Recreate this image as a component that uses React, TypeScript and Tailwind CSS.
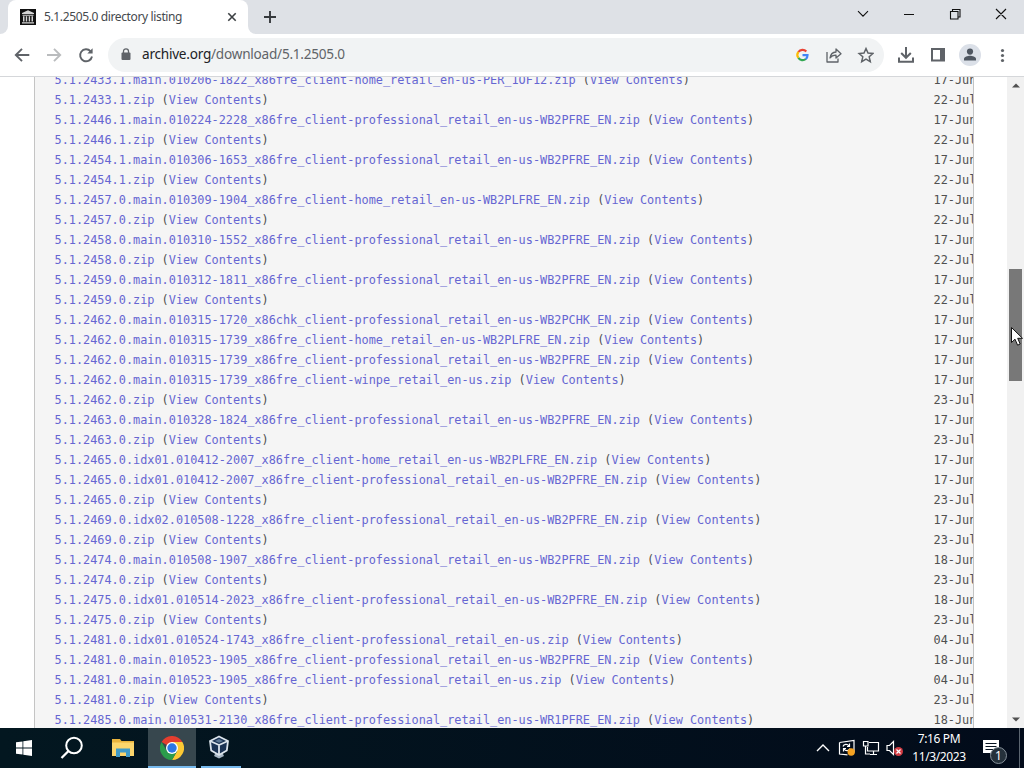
import React from "react";

type Entry = [name: string, date: string];

const P = "_x86fre_client-professional_retail_en-us-WB2PFRE_EN.zip";

const entries: Entry[] = [
  ["5.1.2433.1.main.010206-1822_x86fre_client-home_retail_en-us-PER_1OF12.zip", "17-Jun"],
  ["5.1.2433.1.zip", "22-Jul"],
  ["5.1.2446.1.main.010224-2228" + P, "17-Jun"],
  ["5.1.2446.1.zip", "22-Jul"],
  ["5.1.2454.1.main.010306-1653" + P, "17-Jun"],
  ["5.1.2454.1.zip", "22-Jul"],
  ["5.1.2457.0.main.010309-1904_x86fre_client-home_retail_en-us-WB2PLFRE_EN.zip", "17-Jun"],
  ["5.1.2457.0.zip", "22-Jul"],
  ["5.1.2458.0.main.010310-1552" + P, "17-Jun"],
  ["5.1.2458.0.zip", "22-Jul"],
  ["5.1.2459.0.main.010312-1811" + P, "17-Jun"],
  ["5.1.2459.0.zip", "22-Jul"],
  ["5.1.2462.0.main.010315-1720_x86chk_client-professional_retail_en-us-WB2PCHK_EN.zip", "17-Jun"],
  ["5.1.2462.0.main.010315-1739_x86fre_client-home_retail_en-us-WB2PLFRE_EN.zip", "17-Jun"],
  ["5.1.2462.0.main.010315-1739" + P, "17-Jun"],
  ["5.1.2462.0.main.010315-1739_x86fre_client-winpe_retail_en-us.zip", "17-Jun"],
  ["5.1.2462.0.zip", "23-Jul"],
  ["5.1.2463.0.main.010328-1824" + P, "17-Jun"],
  ["5.1.2463.0.zip", "23-Jul"],
  ["5.1.2465.0.idx01.010412-2007_x86fre_client-home_retail_en-us-WB2PLFRE_EN.zip", "17-Jun"],
  ["5.1.2465.0.idx01.010412-2007" + P, "17-Jun"],
  ["5.1.2465.0.zip", "23-Jul"],
  ["5.1.2469.0.idx02.010508-1228" + P, "17-Jun"],
  ["5.1.2469.0.zip", "23-Jul"],
  ["5.1.2474.0.main.010508-1907" + P, "18-Jun"],
  ["5.1.2474.0.zip", "23-Jul"],
  ["5.1.2475.0.idx01.010514-2023" + P, "18-Jun"],
  ["5.1.2475.0.zip", "23-Jul"],
  ["5.1.2481.0.idx01.010524-1743_x86fre_client-professional_retail_en-us.zip", "04-Jul"],
  ["5.1.2481.0.main.010523-1905" + P, "18-Jun"],
  ["5.1.2481.0.main.010523-1905_x86fre_client-professional_retail_en-us.zip", "04-Jul"],
  ["5.1.2481.0.zip", "23-Jul"],
  ["5.1.2485.0.main.010531-2130_x86fre_client-professional_retail_en-us-WR1PFRE_EN.zip", "18-Jun"],
];

function TabStrip() {
  return (
    <div className="flex h-[34px] items-stretch bg-[#dee1e6]">
      <div className="flex w-2 items-end bg-white">
        <div className="h-full w-2 rounded-br-lg bg-[#dee1e6]" />
      </div>
      <div className="flex w-[240px] items-center rounded-t-lg bg-white pl-3">
        <svg width="16" height="16" viewBox="0 0 16 16">
          <rect width="16" height="16" fill="#111" />
          <path d="M8 1.2 14 4v1H2V4zM2.5 5.8h11v.9h-11zM3 7.2h1.5v5.3H3zM5.8 7.2h1.4v5.3H5.800zM8.700 7.200h1.400v5.300H8.700zM11.500 7.200H13v5.300h-1.500zM2 13.200h12v1.300H2z" fill="#d5d5d5" />
        </svg>
        <span className="ml-2 w-[183px] whitespace-nowrap text-[12px] tracking-[-0.37px] text-[#45494d]">5.1.2505.0 directory listing</span>
        <svg width="10" height="10" viewBox="0 0 10 10" stroke="#3c4043" strokeWidth="1.6"><path d="m1.3 1.3 7.4 7.4m0-7.4L1.3 8.7" /></svg>
      </div>
      <div className="flex w-2 bg-white">
        <div className="h-full w-2 rounded-bl-lg bg-[#dee1e6]" />
      </div>
      <svg className="ml-[7px] mt-[10px]" width="14" height="14" viewBox="0 0 14 14" stroke="#36393d" strokeWidth="1.9"><path d="M7 1v12M1 7h12" /></svg>
      <svg className="ml-auto mt-[8px]" width="152" height="12" viewBox="0 0 152 12" fill="none" stroke="#111" strokeWidth="1.1">
        <path d="m1 3.200 5 5 5-5M47 6.500h10M93.500 3.500h7.500v7.500h-7.500zM95.500 3.500v-2h7.500V9h-2M139 1l10 10m0-10-10 10" />
      </svg>
      <div className="w-[15px]" />
    </div>
  );
}

function Toolbar() {
  return (
    <div className="flex h-[43px] items-center border-b border-[#d5d7da] bg-white pb-px">
      <svg width="108" height="24" viewBox="0 0 108 24" fill="none" strokeWidth="1.9">
        <path d="M29.3 12H16m6-6.2L15.8 12l6.2 6.2" stroke="#5f6368" />
        <path d="M47 12h13m-6-6.2 6.2 6.2-6.2 6.2" stroke="#babcbe" />
        <path d="M90.6 8.3A6 6 0 1 0 92 13.5" stroke="#5f6368" />
        <path d="M92.6 5.2v5.3h-5.3z" fill="#5f6368" />
      </svg>
      <div className="flex h-[34px] w-[776px] items-center rounded-full bg-[#f1f3f4] pl-[13px]">
        <svg width="10" height="13" viewBox="0 0 10 13"><rect x=".5" y="4.5" width="9" height="7.5" rx="1" fill="#5f6368" /><path d="M2.5 5V3.3a2.5 2.5 0 0 1 5 0V5" fill="none" stroke="#5f6368" strokeWidth="1.3" /></svg>
        <span className="ml-[11px] whitespace-nowrap text-[13.6px] tracking-[-0.24px] text-[#5f6368]"><span className="text-[#202124]">archive.org</span>/download/5.1.2505.0</span>
        <svg className="ml-auto mr-[10px]" width="80" height="18" viewBox="0 0 80 18" fill="none">
          <g strokeWidth="2.2">
            <path d="M12.300 5.500A5 5 0 0 0 4.400 6" stroke="#ea4335" />
            <path d="M4.400 5.900a5 5 0 0 0 0 6" stroke="#fbbc05" />
            <path d="M4.400 11.800a5 5 0 0 0 7.400 1.200" stroke="#34a853" />
            <path d="M11.700 13.100A5 5 0 0 0 13.500 9.200H8.500" stroke="#4285f4" />
          </g>
          <g stroke="#5f6368" strokeWidth="1.3" strokeLinejoin="round">
            <path d="M33 6v10h11v-3.500" />
            <path d="M36 12c.6-4 2.800-5.800 6-6V3l5 4.700-5 4.300V9.200c-2.700-.1-4.600.8-6 2.800z" />
          </g>
          <path d="m72 2.500 2 4.500 4.900.5-3.700 3.300 1.100 4.900-4.300-2.500-4.300 2.500 1.100-4.900-3.700-3.300L70 7z" stroke="#5f6368" strokeWidth="1.500" />
        </svg>
      </div>
      <svg width="140" height="24" viewBox="0 0 140 24" fill="none">
        <path d="M22 4v10.500m-4.800-4.500 4.800 4.800 4.800-4.800M15 14.500v4.200h14v-4.200" stroke="#5f6368" strokeWidth="2" />
        <path d="M47 5h14v13.500H47zm2 2v9.500h7V7z" fill="#5f6368" fillRule="evenodd" />
        <circle cx="86" cy="12" r="11" fill="#dbe0e8" />
        <circle cx="86" cy="8.600" r="3.100" fill="#4e5661" />
        <path d="M80 17.500v-1.700c0-2.100 3.900-3.100 6-3.100s6 1 6 3.100v1.700z" fill="#4e5661" />
        <g fill="#5f6368"><circle cx="118.500" cy="7.500" r="1.600" /><circle cx="118.500" cy="12.500" r="1.600" /><circle cx="118.500" cy="17.500" r="1.600" /></g>
      </svg>
    </div>
  );
}

function Listing() {
  return (
    <div className="flex h-[651px] overflow-hidden bg-white">
      <div className="ml-[34px] w-[940px] overflow-hidden border-x border-[#c4c4c4] bg-[#f5f5f5]">
        <div className="-mt-[6px] pl-[19.500px] font-['DejaVu_Sans_Mono',monospace] text-[11.870px] text-[#505050]">
          {entries.map(([name, date]) => (
            <div key={name} className="flex h-5 items-center whitespace-pre">
              <span className="w-[879px] shrink-0">
                <a className="text-[#6666d2]">{name}</a> (<a className="text-[#6666d2]">View Contents</a>)
              </span>
              <span>{date}</span>
            </div>
          ))}
        </div>
      </div>
      <div className="ml-auto flex w-[17px] flex-col items-center bg-[#f1f1f1]">
        <svg className="mt-[6px]" width="8" height="5" viewBox="0 0 8 5"><path d="m0 4.500 4-4 4 4z" fill="#505050" /></svg>
        <div className="mt-[181px] h-[112px] w-[13px] bg-[#787878]" />
        <svg className="mb-[6px] mt-auto" width="8" height="5" viewBox="0 0 8 5"><path d="m0 .5 4 4 4-4z" fill="#505050" /></svg>
      </div>
    </div>
  );
}

function Taskbar() {
  return (
    <div className="flex h-10 bg-linear-to-r from-[#031720] to-[#020b1a] text-white">
      <div className="flex w-12 items-center justify-center">
        <svg width="16" height="16" viewBox="0 0 16 16" fill="#fff"><path d="M0 2.300 6.500 1.400v6.200H0zM7.300 1.300 16 0v7.600H7.300zM0 8.400h6.500v6.200L0 13.700zM7.300 8.400H16V16l-8.700-1.300z" /></svg>
      </div>
      <div className="flex w-[50px] items-center justify-center pr-[2px]">
        <svg width="24" height="24" viewBox="0 0 24 24" fill="none" stroke="#fff" strokeWidth="2"><circle cx="14" cy="9.500" r="7.800" /><path d="m8.500 15-7 7" strokeWidth="2.300" /></svg>
      </div>
      <div className="flex w-[50px] items-center justify-center">
        <svg width="22" height="18" viewBox="0 0 22 18">
          <path d="M0 0h8l1.500 2H22v15H0z" fill="#e9b33d" /><path d="M0 3.500h22V17H0z" fill="#fbd56c" /><path d="M4 9.500h14V18h-4v-4.500H8V18H4z" fill="#3f9ac8" />
        </svg>
      </div>
      <div className="flex w-12 flex-col items-center border-b-2 border-[#76b9ed] bg-[#37474e] pt-2">
        <svg width="24" height="24" viewBox="0 0 24 24">
          <path d="M12 12 1.600 6A12 12 0 0 1 22.400 6z" fill="#e43e2f" />
          <path d="M12 12V6h10.400A12 12 0 0 1 12 24l5.200-9z" fill="#fcc934" />
          <path d="M12 12l5.200 3L12 24A12 12 0 0 1 1.600 6l5.200 9z" fill="#2b9c4b" />
          <circle cx="12" cy="12" r="6" fill="#fff" /><circle cx="12" cy="12" r="4.700" fill="#2d77e5" />
        </svg>
      </div>
      <div className="ml-[5px] flex w-10 flex-col items-center border-b-2 border-[#76b9ed] pt-[7px]">
        <svg className="-ml-[4px]" width="22" height="24" viewBox="0 0 22 24" strokeLinejoin="round">
          <path d="m8 17-2 4 5 2.500 5-2.500-2-4z" fill="#a8b7c5" />
          <path d="m11 1.500 9 4.500-1.200 9.500L11 20l-7.800-4.500L2 6z" fill="#1b3354" stroke="#dce4ec" strokeWidth="1.800" />
          <path d="m2 6 9 4 9-4M11 10v10" fill="none" stroke="#dce4ec" strokeWidth="1.800" />
          <path d="m7 6 4-2 4 2-4 1.800z" fill="#5d7794" />
        </svg>
      </div>
      <svg className="ml-auto" width="92" height="40" viewBox="0 0 92 40" fill="none" stroke="#fff" strokeWidth="1.200">
        <path d="m5 23 6-6 6 6" strokeWidth="1.400" />
        <path d="M27.500 14.500 42 12.500v12M27.500 14.500v11.500l8 .8" />
        <path d="M31 18.500c.7-2.500 4.500-2.800 6-.5m.5-2.500v3H35m3 2c-.7 2.500-4.500 2.800-6 .5m-.5 2.500v-3H34" />
        <circle cx="39.200" cy="24" r="3.700" fill="#f6a221" stroke="none" />
        <path d="M57 14.500h9.500v8.500h-11v-4M58 26.500h7M61.500 23v3.500M51.500 13.500h4.500v4.500h-4.500zM53.500 18v8H58" />
        <path d="M75 17.500h2.500l4-4v13l-4-4H75z" />
        <circle cx="86.500" cy="23.500" r="4.500" fill="#d13b43" stroke="none" />
        <path d="m84.500 21.500 4 4m0-4-4 4" />
      </svg>
      <div className="ml-[2px] flex w-[66px] flex-col items-center whitespace-nowrap pt-[2px] text-[12px] leading-[18px] tracking-[-0.36px]">
        <span>7:16 PM</span>
        <span>11/3/2023</span>
      </div>
      <svg className="ml-[8px]" width="32" height="40" viewBox="0 0 32 40">
        <path d="M3 12h16v13h-5v4l-4-4H3z" fill="#fff" /><path d="M5.500 15.500h11M5.500 18.500h11M5.500 21.500h11" stroke="#071321" />
        <circle cx="18.500" cy="27.500" r="8" fill="#25313b" stroke="#85909a" />
        <text x="18.500" y="32" fontSize="12" textAnchor="middle" fill="#fff">1</text>
      </svg>
      <div className="ml-[7px] mr-1 w-px bg-[#5b6570]" />
    </div>
  );
}

export default function App() {
  return (
    <div className="relative h-[768px] w-[1024px] overflow-hidden font-['Noto_Sans',sans-serif]">
      <TabStrip />
      <Toolbar />
      <Listing />
      <Taskbar />
      <svg className="absolute left-[1010px] top-[326px]" width="14" height="21" viewBox="0 0 14 21"><path d="M1.500 1.500v15l3.500-3.300 2.600 6 2.600-1.200-2.500-5.700h4.800z" fill="#fff" stroke="#111" /></svg>
    </div>
  );
}
